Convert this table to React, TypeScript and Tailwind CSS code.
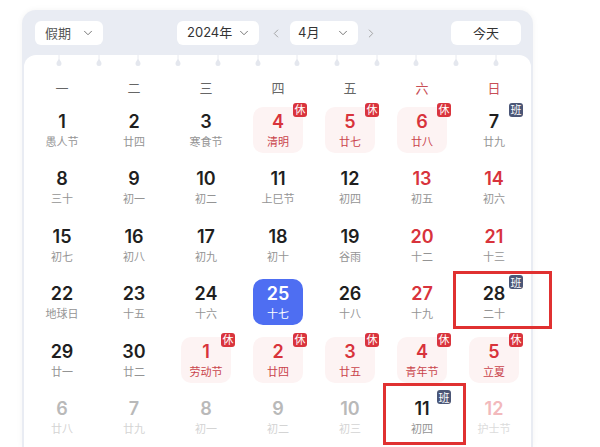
import React from "react";
import { ChevronDown, ChevronLeft, ChevronRight } from "lucide-react";

type Cell = {
  d: string;
  l: string;
  kind?: "hol" | "red" | "today" | "faded" | "fadedRed";
  badge?: "休" | "班";
};

const rows: Cell[][] = [
  [
    { d: "1", l: "愚人节" },
    { d: "2", l: "廿四" },
    { d: "3", l: "寒食节" },
    { d: "4", l: "清明", kind: "hol", badge: "休" },
    { d: "5", l: "廿七", kind: "hol", badge: "休" },
    { d: "6", l: "廿八", kind: "hol", badge: "休" },
    { d: "7", l: "廿九", badge: "班" },
  ],
  [
    { d: "8", l: "三十" },
    { d: "9", l: "初一" },
    { d: "10", l: "初二" },
    { d: "11", l: "上巳节" },
    { d: "12", l: "初四" },
    { d: "13", l: "初五", kind: "red" },
    { d: "14", l: "初六", kind: "red" },
  ],
  [
    { d: "15", l: "初七" },
    { d: "16", l: "初八" },
    { d: "17", l: "初九" },
    { d: "18", l: "初十" },
    { d: "19", l: "谷雨" },
    { d: "20", l: "十二", kind: "red" },
    { d: "21", l: "十三", kind: "red" },
  ],
  [
    { d: "22", l: "地球日" },
    { d: "23", l: "十五" },
    { d: "24", l: "十六" },
    { d: "25", l: "十七", kind: "today" },
    { d: "26", l: "十八" },
    { d: "27", l: "十九", kind: "red" },
    { d: "28", l: "二十", badge: "班" },
  ],
  [
    { d: "29", l: "廿一" },
    { d: "30", l: "廿二" },
    { d: "1", l: "劳动节", kind: "hol", badge: "休" },
    { d: "2", l: "廿四", kind: "hol", badge: "休" },
    { d: "3", l: "廿五", kind: "hol", badge: "休" },
    { d: "4", l: "青年节", kind: "hol", badge: "休" },
    { d: "5", l: "立夏", kind: "hol", badge: "休" },
  ],
  [
    { d: "6", l: "廿八", kind: "faded" },
    { d: "7", l: "廿九", kind: "faded" },
    { d: "8", l: "初一", kind: "faded" },
    { d: "9", l: "初二", kind: "faded" },
    { d: "10", l: "初三", kind: "faded" },
    { d: "11", l: "初四", badge: "班" },
    { d: "12", l: "护士节", kind: "fadedRed" },
  ],
];

const weekdays = ["一", "二", "三", "四", "五", "六", "日"];

function Pin() {
  return (
    <svg width="8" height="12" viewBox="0 0 8 12">
      <line x1="4" y1="0" x2="4" y2="6" stroke="#e8eaf0" strokeWidth="1" />
      <path d="M4 4 C5.5 6 6.5 7 6.5 8.5 A2.5 2.5 0 0 1 1.5 8.5 C1.5 7 2.5 6 4 4 Z" fill="#e4e7ee" />
    </svg>
  );
}

function DayCell({ c }: { c: Cell }) {
  let box = "";
  let num = "text-[#1f1f1f]";
  let lun = "text-[#949494]";
  if (c.kind === "hol") {
    box = "bg-[#fdf3f3]";
    num = "text-[#d8333c]";
    lun = "text-[#c9434b]";
  } else if (c.kind === "red") {
    num = "text-[#d8333c]";
  } else if (c.kind === "today") {
    box = "bg-[#4e6ef2]";
    num = "text-white";
    lun = "text-white";
  } else if (c.kind === "faded") {
    num = "text-[#b9b9b9]";
    lun = "text-[#d4d4d4]";
  } else if (c.kind === "fadedRed") {
    num = "text-[#f2b9bc]";
    lun = "text-[#dcdcdc]";
  }
  return (
    <div className="flex h-[57.5px] items-center justify-center">
      <div className={`relative flex h-[46px] w-[50px] flex-col items-center justify-center rounded-[10px] ${box}`}>
        <div className={`text-[18px] font-semibold leading-[20px] ${num}`} style={{ fontFamily: "Inter, 'Noto Sans CJK SC', sans-serif" }}>
          {c.d}
        </div>
        <div className={`mt-[2px] text-[11px] leading-[14px] ${lun}`}>{c.l}</div>
        {c.badge && (
          <div
            className={`absolute right-[-4px] top-[-4px] flex h-[14px] w-[14px] items-center justify-center rounded-[3px] text-[11px] leading-none text-white ${
              c.badge === "休" ? "bg-[#d9343d]" : "bg-[#4b5676]"
            }`}
          >
            {c.badge}
          </div>
        )}
      </div>
    </div>
  );
}

export default function App() {
  return (
    <div
      className="relative h-[447px] w-[600px] overflow-hidden bg-white"
      style={{ fontFamily: "'Noto Sans CJK SC', 'Noto Sans', sans-serif" }}
    >
      <div className="ml-[22px] mt-[10px] w-[511px] rounded-t-[14px] bg-[#e9ecf3] px-[2px] shadow-[0_0_6px_rgba(0,0,0,0.05)]">
        <div className="flex h-[45px] items-center pt-[1px]">
          <div className="ml-[11px] flex h-[24px] w-[68px] items-center justify-between rounded-[6px] bg-white pl-[10px] pr-[8px] text-[13px] text-[#555]">
            <span>假期</span>
            <ChevronDown size={14} strokeWidth={1.5} color="#666" />
          </div>
          <div className="ml-[74px] flex h-[24px] w-[82px] items-center justify-between rounded-[6px] bg-white pl-[10px] pr-[8px] text-[13px] text-[#333]">
            <span style={{ fontFamily: "Inter, 'Noto Sans CJK SC', sans-serif" }}>2024年</span>
            <ChevronDown size={14} strokeWidth={1.5} color="#666" />
          </div>
          <div className="ml-[10px] flex w-[14px] justify-center">
            <ChevronLeft size={15} strokeWidth={1.5} color="#999" />
          </div>
          <div className="ml-[7px] flex h-[24px] w-[68px] items-center justify-between rounded-[6px] bg-white pl-[8px] pr-[8px] text-[13px] text-[#333]">
            <span style={{ fontFamily: "Inter, 'Noto Sans CJK SC', sans-serif" }}>4月</span>
            <ChevronDown size={14} strokeWidth={1.5} color="#666" />
          </div>
          <div className="ml-[6px] flex w-[14px] justify-center">
            <ChevronRight size={15} strokeWidth={1.5} color="#999" />
          </div>
          <div className="ml-auto mr-[10px] flex h-[24px] w-[70px] items-center justify-center rounded-[6px] bg-white text-[13px] text-[#333]">
            今天
          </div>
        </div>
        <div className="h-[392px] rounded-t-[12px] bg-white">
          <div className="flex h-[20px] justify-between pl-[31px] pr-[31px]">
            {Array.from({ length: 12 }).map((_, i) => (
              <Pin key={i} />
            ))}
          </div>
          <div className="ml-[2px] grid w-[504px] grid-cols-7">
            {weekdays.map((w, i) => (
              <div
                key={w}
                className={`flex h-[26px] items-start justify-center pt-[3px] text-[13px] ${
                  i >= 5 ? "text-[#c84e56]" : "text-[#666]"
                }`}
              >
                {w}
              </div>
            ))}
            {rows.flat().map((c, i) => (
              <DayCell key={i} c={c} />
            ))}
          </div>
        </div>
      </div>
      <div className="absolute left-[453px] top-[271px] h-[58px] w-[99px] border-[3px] border-[#e03131]" />
      <div className="absolute left-[383px] top-[383px] h-[62px] w-[83px] border-[3px] border-[#e03131]" />
    </div>
  );
}
